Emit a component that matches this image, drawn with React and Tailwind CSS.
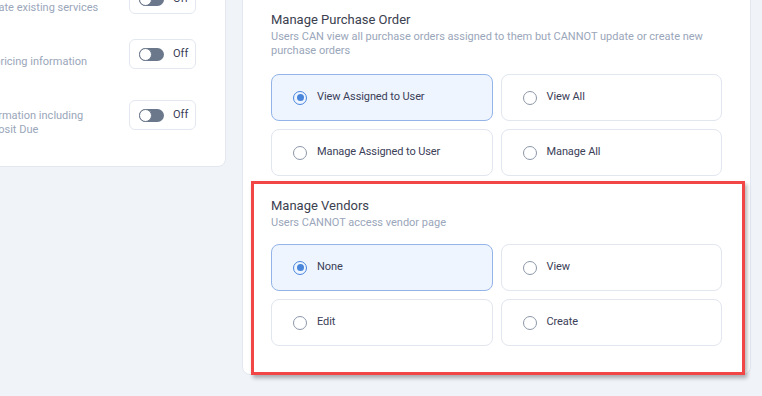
import { useState } from 'react';

const toggles = [
  { text: 'Update existing services', pt: 'pt-[17px]', h: 'h-[55px]' },
  { text: 'All pricing information', pt: 'pt-[16px]', h: 'h-[61px]' },
  { text: 'Information including Deposit Due', pt: 'pt-[9px]', h: '' },
];

const sections = [
  {
    title: 'Manage Purchase Order',
    desc: 'Users CAN view all purchase orders assigned to them but CANNOT update or create new purchase orders',
    options: ['View Assigned to User', 'View All', 'Manage Assigned to User', 'Manage All'],
    gap: 'mt-[16px]',
  },
  {
    title: 'Manage Vendors',
    desc: 'Users CANNOT access vendor page',
    options: ['None', 'View', 'Edit', 'Create'],
    gap: 'mt-[14px]',
  },
];

export default function App() {
  const [picked, setPicked] = useState({ 0: 0, 1: 0 });

  return (
    <div className="relative min-h-screen overflow-hidden bg-[#f0f3f8] font-['Roboto',sans-serif]">
      <div className="flex items-start gap-[16px] -ml-[45px]">
        <div className="w-[271px] shrink-0 -mt-[40px] bg-white border border-[#e3e8f0] rounded-[8px] pl-[23px] pr-[29px] pt-[23px] pb-[29px]">
          {toggles.map((t, i) => (
            <div key={i} className={`flex justify-between ${t.h}`}>
              <p className={`w-[125px] text-[11px] leading-[14px] text-[#9aa6ba] ${t.pt}`}>{t.text}</p>
              <Toggle />
            </div>
          ))}
        </div>

        <div className="w-[509px] shrink-0 -mt-[10px] bg-white border border-[#e3e8f0] rounded-[8px] px-[28px] pt-[21px] pb-[28px] flex flex-col gap-[22px]">
          {sections.map((s, si) => (
            <div key={s.title}>
              <h3 className="text-[13px] leading-[16px] text-[#3b4150]">{s.title}</h3>
              <p className="mt-[2px] text-[11px] leading-[14px] text-[#9aa6ba]">{s.desc}</p>
              <div className={`${s.gap} grid grid-cols-2 gap-[8px]`}>
                {s.options.map((o, oi) => {
                  const on = picked[si] === oi;
                  return (
                    <button
                      key={o}
                      onClick={() => setPicked({ ...picked, [si]: oi })}
                      className={`h-[47px] flex items-center gap-[10px] pl-[21px] rounded-[8px] border text-left ${
                        on ? 'bg-[#eef5ff] border-[#94b4e8]' : 'bg-white border-[#e1e6ef]'
                      }`}
                    >
                      <span
                        className={`w-[14px] h-[14px] rounded-full border-[1.5px] flex items-center justify-center ${
                          on ? 'border-[#4a85dc]' : 'border-[#8d97a8]'
                        }`}
                      >
                        {on && <span className="w-[7px] h-[7px] rounded-full bg-[#4a85dc]" />}
                      </span>
                      <span className="text-[11px] tracking-[-0.1px] text-[#3b4057]">{o}</span>
                    </button>
                  );
                })}
              </div>
            </div>
          ))}
        </div>
      </div>

      <div className="absolute left-[251px] top-[181px] w-[494px] h-[194px] border-[3px] border-[#f24646] shadow-[2px_3px_4px_rgba(0,0,0,0.3)]" />
    </div>
  );
}

function Toggle() {
  return (
    <div className="w-[67px] h-[30px] shrink-0 flex items-center gap-[9px] pl-[9px] border border-[#e3e8f0] rounded-[6px] bg-white">
      <span className="relative w-[25px] h-[13px] rounded-full bg-[#6b788c]">
        <span className="absolute left-0 top-0 w-[13px] h-[13px] rounded-full bg-white border border-[#6b788c]" />
      </span>
      <span className="text-[11px] text-[#3b4057]">Off</span>
    </div>
  );
}
